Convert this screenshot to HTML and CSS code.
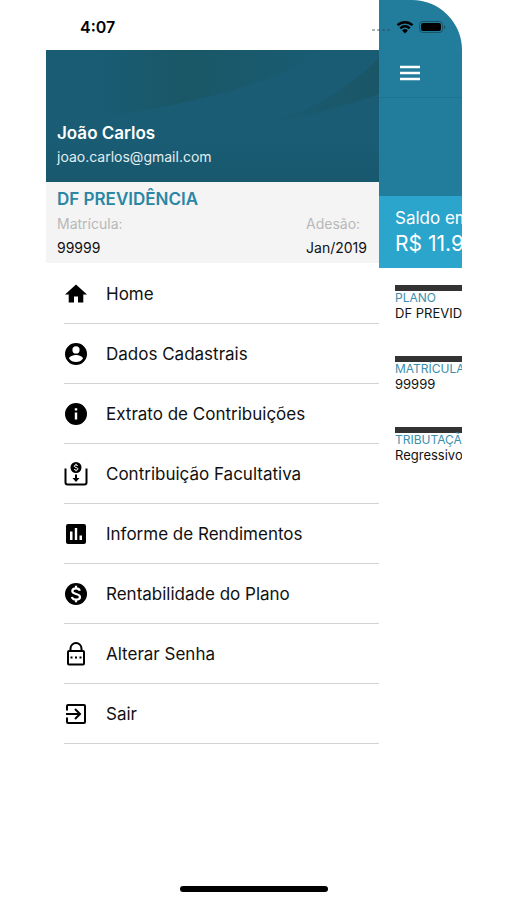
FILE: index.html
```html
<!DOCTYPE html>
<html lang="pt-BR">
<head>
    <meta charset="UTF-8">
    <meta name="viewport" content="width=device-width, initial-scale=1.0">
    <title>DF Previdência</title>
    <link rel="stylesheet" href="styles.css">
</head>
<body>
    <div class="phone">
        <div class="screen">
            <aside class="drawer">
                <div class="clock">4:07</div>

                <header class="profile">
                    <svg class="profile-waves" viewBox="0 0 333 132" preserveAspectRatio="none" aria-hidden="true">
                        <defs>
                            <linearGradient id="fold" x1="0" x2="1">
                                <stop offset="0" stop-color="#1a5765" stop-opacity="0"/>
                                <stop offset=".4" stop-color="#1a5765" stop-opacity=".9"/>
                                <stop offset="1" stop-color="#1a5765" stop-opacity=".1"/>
                            </linearGradient>
                            <linearGradient id="edge" x1="0" x2="1">
                                <stop offset="0" stop-color="#1a5564" stop-opacity="0"/>
                                <stop offset="1" stop-color="#1a5564" stop-opacity=".9"/>
                            </linearGradient>
                            <linearGradient id="shade" x1="0" x2="0" y1="0" y2="1">
                                <stop offset="0" stop-color="#17566a" stop-opacity="0"/>
                                <stop offset="1" stop-color="#17566a" stop-opacity=".7"/>
                            </linearGradient>
                        </defs>
                        <path d="M50 0H270C250 22 205 38 130 54C100 60 70 66 50 68Z" fill="url(#fold)"/>
                        <path d="M333 8C300 40 270 58 215 76C260 66 300 56 333 44Z" fill="url(#edge)"/>
                        <path d="M0 90H333V132H0Z" fill="url(#shade)"/>
                    </svg>
                    <h1>João Carlos</h1>
                    <p>joao.carlos@gmail.com</p>
                </header>

                <section class="plan">
                    <h2>DF PREVIDÊNCIA</h2>
                    <dl>
                        <div>
                            <dt>Matrícula:</dt>
                            <dd>99999</dd>
                        </div>
                        <div>
                            <dt>Adesão:</dt>
                            <dd>Jan/2019</dd>
                        </div>
                    </dl>
                </section>

                <nav class="menu">
                    <a href="#home">
                        <svg viewBox="0 0 24 24"><path d="M10 20.500v-6h4v6h5.300v-8H23L12 2.500 1 12.500h3.700v8z"/></svg>
                        Home
                    </a>
                    <a href="#dados">
                        <svg viewBox="0 0 24 24"><path d="M12 1a11 11 0 1 0 0 22 11 11 0 0 0 0-22zm0 3.300a3.600 3.600 0 1 1 0 7.200 3.600 3.600 0 0 1 0-7.200zm0 15.700c-2.900 0-5.500-1.400-7-3.600.1-2.300 4.700-3.500 7-3.500s6.900 1.200 7 3.500c-1.500 2.200-4.100 3.600-7 3.600z"/></svg>
                        Dados Cadastrais
                    </a>
                    <a href="#extrato">
                        <svg viewBox="0 0 24 24"><path d="M12 1a11 11 0 1 0 0 22 11 11 0 0 0 0-22zm1.200 16.500h-2.400v-7h2.400zm0-9h-2.400V6.200h2.400z"/></svg>
                        Extrato de Contribuições
                    </a>
                    <a href="#contribuicao">
                        <svg viewBox="0 0 24 24">
                            <path d="M1.500 6.500v14q0 2 2 2h17q2 0 2-2v-14" fill="none" stroke="#000" stroke-width="2"/>
                            <circle cx="12" cy="5.500" r="5.500"/>
                            <path d="M13.900 3.900c-.4-1.300-3.700-1.300-3.700.3s3.800 1 3.800 2.700-3.500 1.600-4 .1M12 1.800v1.300M12 8v1.300" fill="none" stroke="#fff"/>
                            <path d="M11 12.500h2V16h2.500L12 20 8.500 16H11z"/>
                        </svg>
                        Contribuição Facultativa
                    </a>
                    <a href="#informe">
                        <svg viewBox="0 0 24 24"><path d="M20 2H4a2 2 0 0 0-2 2v16c0 1.100.9 2 2 2h16a2 2 0 0 0 2-2V4a2 2 0 0 0-2-2zM8.500 18H6V9.500h2.500zm4.700 0h-2.400V6h2.400zm4.800 0h-2.500v-4.500H18z"/></svg>
                        Informe de Rendimentos
                    </a>
                    <a href="#rentabilidade">
                        <svg viewBox="0 0 24 24">
                            <circle cx="12" cy="12" r="11"/>
                            <path d="M15.800 8.800c-.5-1.800-2-2.400-3.700-2.400-2.200 0-3.800 1-3.800 2.700 0 4 7.700 1.700 7.700 5.900 0 1.700-1.700 2.700-3.900 2.700-2.300 0-3.800-1-4.100-2.900M12 3.800v2.800M12 17.500v2.800" fill="none" stroke="#fff" stroke-width="2.200"/>
                        </svg>
                        Rentabilidade do Plano
                    </a>
                    <a href="#senha">
                        <svg viewBox="0 0 24 24">
                            <path d="M6.500 9V6.500a5.500 5.500 0 0 1 11 0V9" fill="none" stroke="#000" stroke-width="2"/>
                            <rect x="4" y="9" width="16" height="13.500" rx="1" fill="none" stroke="#000" stroke-width="2"/>
                            <path d="M6.500 14.500h2v2h-2zM11 14.500h2v2h-2zM15.500 14.500h2v2h-2z"/>
                        </svg>
                        Alterar Senha
                    </a>
                    <a href="#sair">
                        <svg viewBox="0 0 24 24">
                            <path d="M3 8.500V4q0-1 1-1h16q1 0 1 1v16q0 1-1 1H4q-1 0-1-1v-4.500" fill="none" stroke="#000" stroke-width="2"/>
                            <path d="M2 12h13.500M11 7l5 5-5 5" fill="none" stroke="#000" stroke-width="2"/>
                        </svg>
                        Sair
                    </a>
                </nav>
            </aside>

            <main class="page">
                <div class="toolbar">
                    <button type="button" aria-label="Menu">
                        <svg viewBox="0 0 22 18"><path d="M1 3h20M1 9h20M1 15h20" stroke="#fff" stroke-width="2.500"/></svg>
                    </button>
                </div>
                <div class="hero"></div>
                <div class="balance">
                    <p>Saldo em</p>
                    <strong>R$ 11.9</strong>
                </div>
                <dl class="details">
                    <div>
                        <dt>PLANO</dt>
                        <dd>DF PREVIDÊNCIA</dd>
                    </div>
                    <div>
                        <dt>MATRÍCULA</dt>
                        <dd>99999</dd>
                    </div>
                    <div>
                        <dt>TRIBUTAÇÃO</dt>
                        <dd>Regressivo</dd>
                    </div>
                </dl>
            </main>

            <div class="status-icons">
                <svg width="20" height="12" viewBox="0 0 20 12"><path d="M1 9h3M6 9h3M11 9h3M16 9h3" stroke="#33474f" stroke-opacity=".4" stroke-width="2"/></svg>
                <svg width="18" height="14" viewBox="0 0 18 14">
                    <path d="M1.500 5.200a10.800 10.800 0 0 1 15 0M4.300 8.300a6.700 6.700 0 0 1 9.400 0" fill="none" stroke="#000" stroke-width="2.500"/>
                    <path d="M9 13.500L6.100 10.500a4.200 4.200 0 0 1 5.800 0z"/>
                </svg>
                <svg width="27" height="12" viewBox="0 0 27 12">
                    <rect x=".5" y=".5" width="23" height="11" rx="3" fill="none" stroke="#175468"/>
                    <rect x="2" y="2" width="20" height="8" rx="2"/>
                    <path d="M25 4v4q1.500-.6 1.500-2T25 4z" fill="#175468"/>
                </svg>
            </div>
        </div>
        <div class="home-indicator"></div>
    </div>
</body>
</html>
```
FILE: styles.css
```css
* { box-sizing: border-box; }
body { margin: 0; background: #fff; color: #111; font-family: Inter, "Liberation Sans", sans-serif; }
h1, h2, p, dl, dd { margin: 0; }

.phone { display: flex; flex-direction: column; min-height: 100vh; margin: 0 45px 0 46px; }
.screen { position: relative; display: flex; }
.drawer { flex: 1; min-width: 0; }
.clock { height: 50px; padding: 0 34px; line-height: 54px; font-size: 16px; font-weight: 600; color: #000; }

.profile { position: relative; display: flex; flex-direction: column; justify-content: flex-end; height: 132px; padding: 0 11px 14px; background: #195c74; color: #fff; }
.profile-waves { position: absolute; left: 0; top: 0; width: 100%; height: 100%; }
.profile h1 { position: relative; font-size: 17px; line-height: 26px; font-weight: 600; }
.profile p { position: relative; font-size: 14px; line-height: 22px; color: #e2edf0; }

.plan { height: 81px; padding: 4px 12px 0 11px; background: #f4f4f4; }
.plan h2 { font-size: 17px; line-height: 26px; font-weight: 600; color: #2a86a5; }
.plan dl { display: flex; justify-content: space-between; font-size: 14px; line-height: 24px; }
.plan dt { color: #b8b8b8; }

.menu { padding: 1px 0 0 18px; }
.menu a { display: flex; align-items: center; gap: 18px; height: 60px; border-bottom: 1px solid #d2d2d2; color: #111; font-size: 17px; text-decoration: none; }
.menu svg { width: 24px; height: 24px; }

.page { width: 83px; overflow: hidden; white-space: nowrap; border-top-right-radius: 50px; }
.toolbar { height: 98px; padding: 61px 17px 0; background: #227d9c; border-bottom: 1px solid #1d7491; }
.toolbar button { display: block; padding: 3px; border: 0; margin: 0; background: none; }
.toolbar svg { display: block; width: 22px; height: 18px; }
.hero { height: 98px; background: #227d9c; }
.balance { height: 72px; padding: 9px 16px; background: #2ba5cc; color: #fff; }
.balance p { font-size: 17px; line-height: 26px; }
.balance strong { display: block; font-size: 21px; line-height: 26px; font-weight: 400; }

/* the bar is the top border, the fixed height leaves the space between fields */
.details { padding: 17px 0 0 16px; }
.details div { height: 71px; border-top: 6px solid #333; }
.details dt { font-size: 12px; line-height: 14px; color: #3a8fac; }
.details dd { font-size: 13px; line-height: 17px; }

.status-icons { position: absolute; top: 20px; right: 16px; display: flex; align-items: center; gap: 5px; }
.home-indicator { align-self: center; width: 148px; height: 6px; margin: auto 0 8px; border-radius: 3px; background: #000; }
```
